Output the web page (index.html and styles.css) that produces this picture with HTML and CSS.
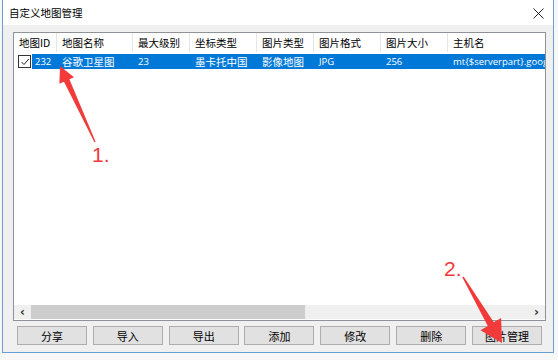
FILE: index.html
```html
<!DOCTYPE html>
<html lang="zh-CN">
<head>
    <meta charset="UTF-8">
    <title>自定义地图管理</title>
    <link rel="stylesheet" href="styles.css">
</head>
<body>
    <div class="window">
        <div class="titlebar">
            <span class="title">自定义地图管理</span>
            <svg class="close" width="11" height="11" viewBox="0 0 11 11">
                <path d="M0.5 0.5L10.5 10.5M10.5 0.5L0.5 10.5" stroke="#222" stroke-width="1" fill="none"/>
            </svg>
        </div>
        <div class="content">
            <div class="listview">
                <div class="grid header">
                    <div class="cell">地图ID</div>
                    <div class="cell">地图名称</div>
                    <div class="cell">最大级别</div>
                    <div class="cell">坐标类型</div>
                    <div class="cell">图片类型</div>
                    <div class="cell">图片格式</div>
                    <div class="cell">图片大小</div>
                    <div class="cell">主机名</div>
                </div>
                <div class="grid row selected">
                    <div class="cell first">
                        <span class="check">
                            <svg width="10" height="10" viewBox="0 0 10 10">
                                <path d="M1.5 5L4 7.5L8.8 2" stroke="#222" stroke-width="1" fill="none"/>
                            </svg>
                        </span>
                        <span class="value latin">232</span>
                    </div>
                    <div class="cell value">谷歌卫星图</div>
                    <div class="cell value latin">23</div>
                    <div class="cell value">墨卡托中国</div>
                    <div class="cell value">影像地图</div>
                    <div class="cell value latin">JPG</div>
                    <div class="cell value latin">256</div>
                    <div class="cell value latin">mt{$serverpart}.google</div>
                </div>
                <div class="list-space"></div>
                <div class="hscroll">
                    <span class="arrow">&lsaquo;</span>
                    <div class="track"><div class="thumb"></div></div>
                    <span class="arrow">&rsaquo;</span>
                </div>
            </div>
            <div class="buttons">
                <button class="btn">分享</button>
                <button class="btn">导入</button>
                <button class="btn">导出</button>
                <button class="btn">添加</button>
                <button class="btn">修改</button>
                <button class="btn">删除</button>
                <button class="btn">图片管理</button>
            </div>
        </div>
    </div>

    <!-- red annotation arrows drawn over the dialog -->
    <svg class="marks" width="558" height="360" viewBox="0 0 558 360">
        <polygon fill="#f23a3a" points="60,66 74,77.2 69.4,79.2 95.6,141.7 94.4,142.3 64,81.8 59.4,83.8"/>
        <polygon fill="#f23a3a" points="502,343 480.5,330.2 487.8,325.9 462.4,277.4 463.6,276.6 493.8,322.3 501.1,318"/>
    </svg>
    <span class="mark mark-one">1.</span>
    <span class="mark mark-two">2.</span>
</body>
</html>
```

FILE: styles.css
```css
body {
    margin: 0;
    width: 558px;
    height: 360px;
    background: #f7f7f7;
    font-family: "Noto Sans CJK SC", sans-serif;
    font-size: 10.5px;
    color: #000;
    position: relative;
    overflow: hidden;
}
.window {
    margin-left: 2px;
    width: 550px;
    height: 352px;
    border: 1px solid #6a9fd6;
    border-top: none;
    background: #f0f0f0;
    display: flex;
    flex-direction: column;
}
.titlebar {
    height: 26px;
    background: #fff;
    display: flex;
    align-items: center;
    justify-content: space-between;
    padding: 0 9px 0 6px;
}
.title {
    font-size: 10.5px;
}
.close {
    margin-top: 1px;
}
.content {
    flex: 1;
    padding: 7px 7px 7px 10px;
    display: flex;
    flex-direction: column;
}
.listview {
    height: 287px;
    border: 1px solid #8f9296;
    background: #fff;
    display: flex;
    flex-direction: column;
    overflow: hidden;
}
.grid {
    display: grid;
    grid-template-columns: 43px 76px 57px 67px 57px 67px 67px 140px;
    white-space: nowrap;
}
.header {
    height: 19px;
}
.header .cell {
    border-right: 1px solid #e5e5e5;
    padding-left: 5px;
    line-height: 19px;
    overflow: hidden;
}
.row {
    height: 15px;
    margin-top: 2px;
}
.row .cell {
    padding-left: 5px;
    line-height: 15px;
    overflow: hidden;
}
.row .first {
    display: flex;
    align-items: center;
    padding-left: 4px;
    overflow: visible;
}
.selected .value {
    background: #0078d7;
    color: #fff;
}
.latin {
    font-family: "Open Sans", "Noto Sans", sans-serif;
    font-size: 9.5px;
}
.selected .first .value {
    flex: 1;
    padding-left: 3px;
    height: 15px;
}
.check {
    width: 11px;
    height: 11px;
    border: 1px solid #333;
    background: #fff;
    display: flex;
    align-items: center;
    justify-content: center;
    margin-right: 1px;
}
.list-space {
    flex: 1;
}
.hscroll {
    height: 14px;
    display: flex;
    align-items: center;
    background: #f0f0f0;
    margin-bottom: 1px;
}
.arrow {
    width: 17px;
    text-align: center;
    font-family: "DejaVu Sans", sans-serif;
    font-size: 12px;
    font-weight: bold;
    color: #333;
    line-height: 14px;
}
.track {
    flex: 1;
    height: 14px;
}
.thumb {
    width: 274px;
    height: 14px;
    background: #cdcdcd;
}
.buttons {
    display: flex;
    justify-content: space-between;
    margin-top: 5px;
    padding: 0 4px 0 4px;
}
.btn {
    width: 70px;
    height: 19px;
    padding: 0;
    border: 1px solid #adadad;
    background: #e1e1e1;
    font-family: "Noto Sans CJK SC", sans-serif;
    font-size: 11px;
    line-height: 16px;
    color: #000;
}
.marks {
    position: absolute;
    left: 0;
    top: 0;
}
.mark {
    position: absolute;
    color: #f23a3a;
    font-family: "Liberation Sans", sans-serif;
    font-size: 21px;
    line-height: 21px;
}
.mark-one {
    left: 92px;
    top: 144px;
}
.mark-two {
    left: 444px;
    top: 258px;
}
```
